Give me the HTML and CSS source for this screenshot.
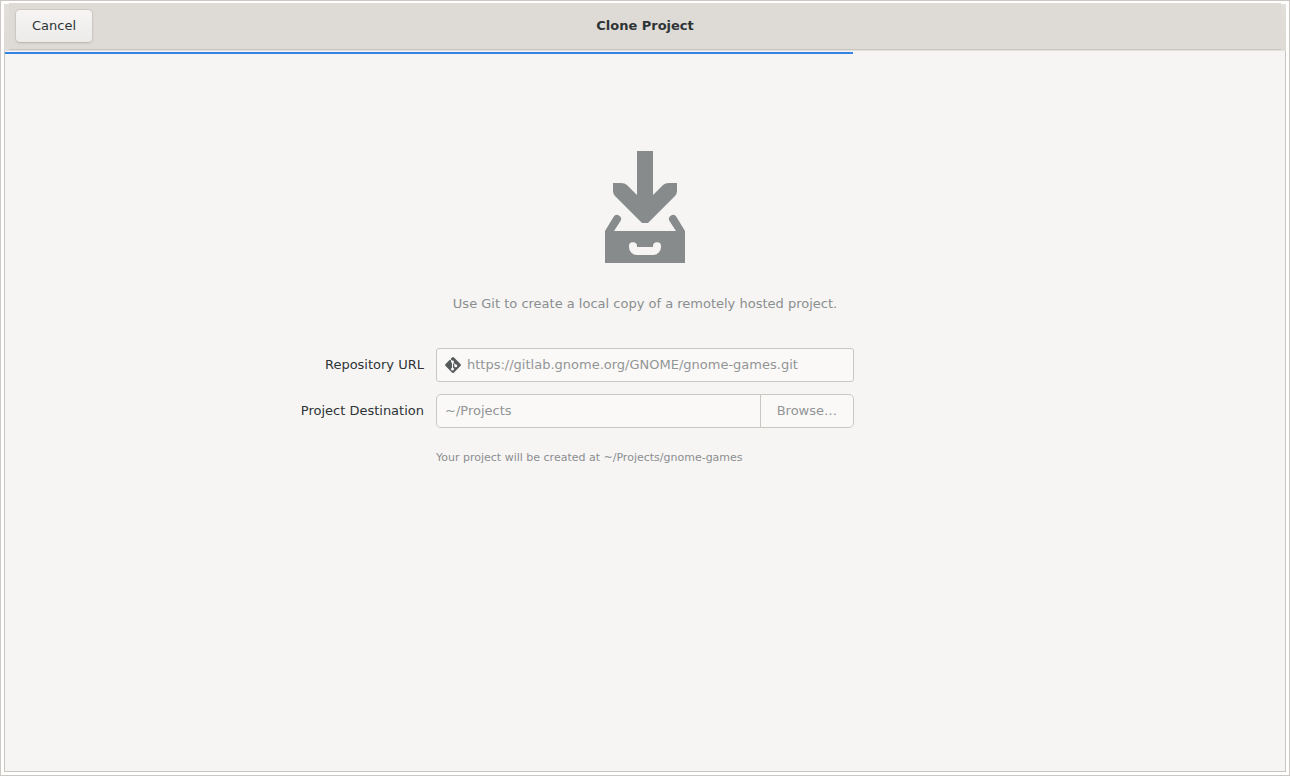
FILE: index.html
```html
<!DOCTYPE html>
<html lang="en">
<head>
    <meta charset="UTF-8">
    <meta name="viewport" content="width=device-width, initial-scale=1.0">
    <title>Clone Project</title>
    <link rel="stylesheet" href="styles.css">
</head>
<body>
    <div class="window">
        <header class="header-bar">
            <button type="button" class="cancel-button">Cancel</button>
            <h1>Clone Project</h1>
        </header>
        <main class="content">
            <div class="progress">
                <div class="progress-fill" style="width: 66.25%"></div>
            </div>
            <svg class="hero-icon" viewBox="0 0 80 112" aria-hidden="true">
                <path d="M32 0H48V44L58 34Q60 32 64 32H72V40Q72 43 70 45L45 70L43 72H37L35 70L10 45Q8 43 8 40V32H16Q20 32 22 34L32 44Z"/>
                <path fill-rule="evenodd" d="M0 80L8.500 66A4 4 0 0 1 15.500 70L9 80H71L64.500 70A4 4 0 0 1 71.500 66L80 80V112H0ZM24 95.500A4 4 0 0 1 32 95V96H48V95A4 4 0 0 1 56 95.500A8 8 0 0 1 48 104H32A8 8 0 0 1 24 95.500Z"/>
            </svg>
            <p class="description">Use Git to create a local copy of a remotely hosted project.</p>
            <form class="clone-form">
                <label for="url">Repository URL</label>
                <div class="entry url-entry">
                    <svg class="git-icon" viewBox="0 0 16 16" aria-hidden="true">
                        <path class="git-shape" d="M7 0.600Q8 -0.400 9 0.600L15.400 7Q16.400 8 15.400 9L9 15.400Q8 16.400 7 15.400L0.600 9Q-0.400 8 0.600 7Z"/>
                        <path class="git-line" d="M5 1.800L7.500 4.800V12M7.500 4.800L10.700 8.700"/>
                        <circle cx="7.500" cy="4.800" r="1.400"/>
                        <circle cx="7.500" cy="12" r="1.500"/>
                        <circle cx="10.700" cy="8.700" r="1.500"/>
                    </svg>
                    <input type="text" id="url" name="url" value="https://gitlab.gnome.org/GNOME/gnome-games.git" disabled>
                </div>
                <label for="destination">Project Destination</label>
                <div class="entry destination-entry">
                    <input type="text" id="destination" name="destination" value="~/Projects" disabled>
                    <button type="button" class="browse-button" disabled>Browse…</button>
                </div>
                <p class="hint">Your project will be created at ~/Projects/gnome-games</p>
            </form>
        </main>
    </div>
</body>
</html>
```
FILE: styles.css
```css
* {
    box-sizing: border-box;
}
body {
    margin: 0;
    min-height: 100vh;
    display: flex;
    padding: 2px 3px 3px;
    border: 1px solid #cdc7c2;
    background: #fff;
    color: #2e3436;
    font-family: "DejaVu Sans", sans-serif;
    font-size: 13px;
    line-height: 16px;
}
button,
input {
    font: inherit;
    color: inherit;
}
.window {
    flex: 1;
    display: flex;
    flex-direction: column;
}
.header-bar {
    display: grid;
    grid-template-columns: 1fr auto 1fr;
    align-items: center;
    height: 48px;
    padding: 0 11px 1px;
    /* slightly lighter strips at both ends of the bar */
    background:
        linear-gradient(#fff 1px, #e2dfdb 1px, #dedbd7) left / 5px 100% no-repeat,
        linear-gradient(#fff 1px, #e2dfdb 1px, #dedbd7) right / 5px 100% no-repeat,
        linear-gradient(#c9c5bf, #c9c5bf) bottom / calc(100% - 10px) 1px no-repeat,
        #dedbd7;
    border-bottom: 1px solid #e4e1dd;
}
.header-bar h1 {
    margin: 0;
    font-size: 13px;
    font-weight: bold;
}
.cancel-button {
    justify-self: start;
    height: 34px;
    padding: 0 16px;
    border: 1px solid #cdc7c2;
    border-bottom-color: #bfb8b1;
    border-radius: 5px;
    background: linear-gradient(to top, #edebe9, #f6f5f4);
    box-shadow: 0 1px 2px rgba(0, 0, 0, 0.07);
}
.content {
    flex: 1;
    display: flex;
    flex-direction: column;
    align-items: center;
    padding-top: 1px;
    border: 1px solid #c8c5c1;
    border-top: none;
    background: #f6f5f4;
}
.progress {
    width: 100%;
    height: 2px;
}
.progress-fill {
    height: 2px;
    background: #3584e4;
}
.hero-icon {
    width: 80px;
    height: 112px;
    margin-top: 97px;
    fill: #888b8b;
}
.description {
    margin: 33px 0 36px;
    color: #8b8e8f;
}
.clone-form {
    display: grid;
    grid-template-columns: 1fr 418px 1fr;
    gap: 12px;
    align-items: center;
    width: 100%;
}
.clone-form label {
    grid-column: 1;
    justify-self: end;
}
.entry {
    display: flex;
    align-items: center;
    height: 34px;
    border: 1px solid #c8c8c3;
    background: #faf9f8;
    color: #929595;
}
.entry input {
    flex: 1;
    min-width: 0;
    padding: 0 8px;
    border: none;
    background: none;
}
.url-entry {
    padding-left: 8px;
    border-radius: 3px;
}
.url-entry input {
    padding-left: 6px;
}
.git-icon {
    width: 16px;
    height: 16px;
    fill: #faf9f8;
}
.git-shape {
    fill: #555a5b;
}
.git-line {
    fill: none;
    stroke: #faf9f8;
    stroke-width: 1;
}
.destination-entry {
    border-radius: 5px;
}
.browse-button {
    height: 32px;
    padding: 0 16px;
    border: none;
    border-left: 1px solid #c8c8c3;
    background: none;
}
.hint {
    grid-column: 2;
    margin: 10px 0;
    color: #8b8e8f;
    font-size: 11px;
}
```
